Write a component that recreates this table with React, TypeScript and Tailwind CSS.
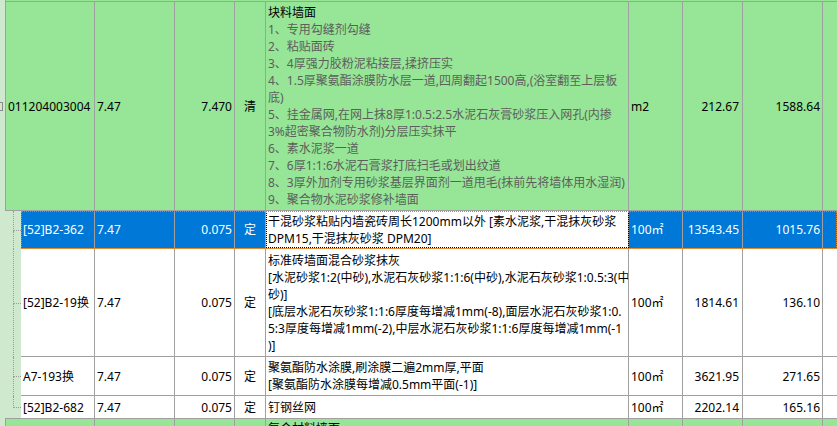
import type { ReactNode } from 'react'

const LINE = 'border-[#a0a0a0]'
const GREEN = 'bg-[#97e597]'
const PALE = 'bg-[#cfe9cf]'

type Item = {
  code: string
  qty: string
  amt: string
  type: string
  desc: string[]
  unit: string
  price: string
  total: string
  h: string
}

const children: Item[] = [
  {
    code: '[52]B2-362',
    qty: '7.47',
    amt: '0.075',
    type: '定',
    desc: ['干混砂浆粘贴内墙瓷砖周长1200mm以外 [素水泥浆,干混抹灰砂浆', 'DPM15,干混抹灰砂浆 DPM20]'],
    unit: '100㎡',
    price: '13543.45',
    total: '1015.76',
    h: 'h-[38px]',
  },
  {
    code: '[52]B2-19换',
    qty: '7.47',
    amt: '0.075',
    type: '定',
    desc: [
      '标准砖墙面混合砂浆抹灰',
      '[水泥砂浆1:2(中砂),水泥石灰砂浆1:1:6(中砂),水泥石灰砂浆1:0.5:3(中',
      '砂)]',
      '[底层水泥石灰砂浆1:1:6厚度每增减1mm(-8),面层水泥石灰砂浆1:0.',
      '5:3厚度每增减1mm(-2),中层水泥石灰砂浆1:1:6厚度每增减1mm(-1',
      ')]',
    ],
    unit: '100㎡',
    price: '1814.61',
    total: '136.10',
    h: 'h-[108px]',
  },
  {
    code: 'A7-193换',
    qty: '7.47',
    amt: '0.075',
    type: '定',
    desc: ['聚氨酯防水涂膜,刷涂膜二遍2mm厚,平面', '[聚氨酯防水涂膜每增减0.5mm平面(-1)]'],
    unit: '100㎡',
    price: '3621.95',
    total: '271.65',
    h: 'h-[39px]',
  },
  {
    code: '[52]B2-682',
    qty: '7.47',
    amt: '0.075',
    type: '定',
    desc: ['钉钢丝网'],
    unit: '100㎡',
    price: '2202.14',
    total: '165.16',
    h: 'h-[22px]',
  },
]

const parentDesc = [
  '1、专用勾缝剂勾缝',
  '2、粘贴面砖',
  '3、4厚强力胶粉泥粘接层,揉挤压实',
  '4、1.5厚聚氨酯涂膜防水层一道,四周翻起1500高,(浴室翻至上层板',
  '底)',
  '5、挂金属网,在网上抹8厚1:0.5:2.5水泥石灰膏砂浆压入网孔(内掺',
  '3%超密聚合物防水剂)分层压实抹平',
  '6、素水泥浆一道',
  '7、6厚1:1:6水泥石膏浆打底扫毛或划出纹道',
  '8、3厚外加剂专用砂浆基层界面剂一道甩毛(抹前先将墙体用水湿润)',
  '9、聚合物水泥砂浆修补墙面',
]

function Cell({ w, align = 'left', className = '', children }: { w: string; align?: 'left' | 'right' | 'center'; className?: string; children?: ReactNode }) {
  return (
    <div
      className={`${w} flex h-full shrink-0 items-center overflow-hidden whitespace-nowrap border-r ${LINE} ${
        align === 'right' ? 'justify-end pr-[2px]' : align === 'center' ? 'justify-center' : 'pl-[2px]'
      } ${className}`}
    >
      {children}
    </div>
  )
}

function TreeGutter({ last }: { last: boolean }) {
  return (
    <div className={`flex h-full w-[21px] shrink-0 ${PALE}`}>
      <div className="w-[13px]" />
      <div className="flex w-[8px] flex-col">
        <div className="flex-1 border-b border-l border-dotted border-[#9a9a9a]" />
        <div className={`flex-1 ${last ? '' : 'border-l border-dotted border-[#9a9a9a]'}`} />
      </div>
    </div>
  )
}

function ChildRow({ item, selected, last }: { item: Item; selected: boolean; last: boolean }) {
  const text = selected ? 'text-white' : 'text-black'
  return (
    <div className={`flex ${item.h}`}>
      <TreeGutter last={last} />
      <div
        className={`flex flex-1 ${last ? '' : `border-b ${LINE}`} ${
          selected ? 'bg-[#0078d7] outline-1 -outline-offset-1 outline-dotted outline-[#d9822b]' : 'bg-white'
        } ${text}`}
      >
        <Cell w="w-[74px]">{item.code}</Cell>
        <Cell w="w-[80px]">{item.qty}</Cell>
        <Cell w="w-[60px]" align="right">{item.amt}</Cell>
        <Cell w="w-[31px]" align="center">{item.type}</Cell>
        <Cell
          w="w-[363px]"
          className={selected ? 'bg-white text-black outline-1 -outline-offset-1 outline-dotted outline-black' : ''}
        >
          <div>
            {item.desc.map((l, i) => (
              <div key={i}>{l}</div>
            ))}
          </div>
        </Cell>
        <Cell w="w-[54px]">{item.unit}</Cell>
        <Cell w="w-[60px]" align="right" className="pr-[3px]">{item.price}</Cell>
        <Cell w="w-[80px]" align="right">{item.total}</Cell>
        <div className="flex-1" />
      </div>
    </div>
  )
}

export default function App() {
  return (
    <div
      className="h-[426px] w-[837px] overflow-hidden bg-white text-[12px] leading-[17px] text-black"
      style={{ fontFamily: '"Noto Sans", "Noto Sans CJK SC", sans-serif' }}
    >
      {/* sliver of the row above */}
      <div className="flex h-[1px]">
        <div className={`w-[5px] ${PALE}`} />
        <div className={`flex-1 border-l ${LINE} ${GREEN}`} />
      </div>

      {/* bill item row */}
      <div className="flex h-[210px]">
        <div className={`flex w-[5px] items-center ${PALE}`}>
          <div className="h-[9px] w-[3px] border-y border-r border-[#8a8a8a]" />
        </div>
        <div className={`flex flex-1 border-y border-l ${LINE} ${GREEN}`}>
          <Cell w="w-[89px]">011204003004</Cell>
          <Cell w="w-[80px]">7.47</Cell>
          <Cell w="w-[60px]" align="right">7.470</Cell>
          <Cell w="w-[31px]" align="center">清</Cell>
          <Cell w="w-[363px]">
            <div>
              <div>块料墙面</div>
              {parentDesc.map((l, i) => (
                <div key={i} className="text-[#5c5f5c]">
                  {l}
                </div>
              ))}
            </div>
          </Cell>
          <Cell w="w-[54px]">m2</Cell>
          <Cell w="w-[60px]" align="right" className="pr-[3px]">212.67</Cell>
          <Cell w="w-[80px]" align="right">1588.64</Cell>
          <div className="flex-1" />
        </div>
      </div>

      {children.map((c, i) => (
        <ChildRow key={c.code} item={c} selected={i === 0} last={i === children.length - 1} />
      ))}

      {/* next bill item, cut off by the window */}
      <div className="flex h-[30px]">
        <div className={`w-[5px] ${PALE}`} />
        <div className={`flex flex-1 border-l border-t ${LINE} ${GREEN}`}>
          <Cell w="w-[89px]" />
          <Cell w="w-[80px]" />
          <Cell w="w-[60px]" />
          <Cell w="w-[31px]" />
          <div className={`w-[363px] shrink-0 border-r ${LINE} pl-[2px] pt-[1px]`}>复合材料墙面</div>
          <Cell w="w-[54px]" />
          <Cell w="w-[60px]" />
          <Cell w="w-[80px]" />
          <div className="flex-1" />
        </div>
      </div>
    </div>
  )
}
